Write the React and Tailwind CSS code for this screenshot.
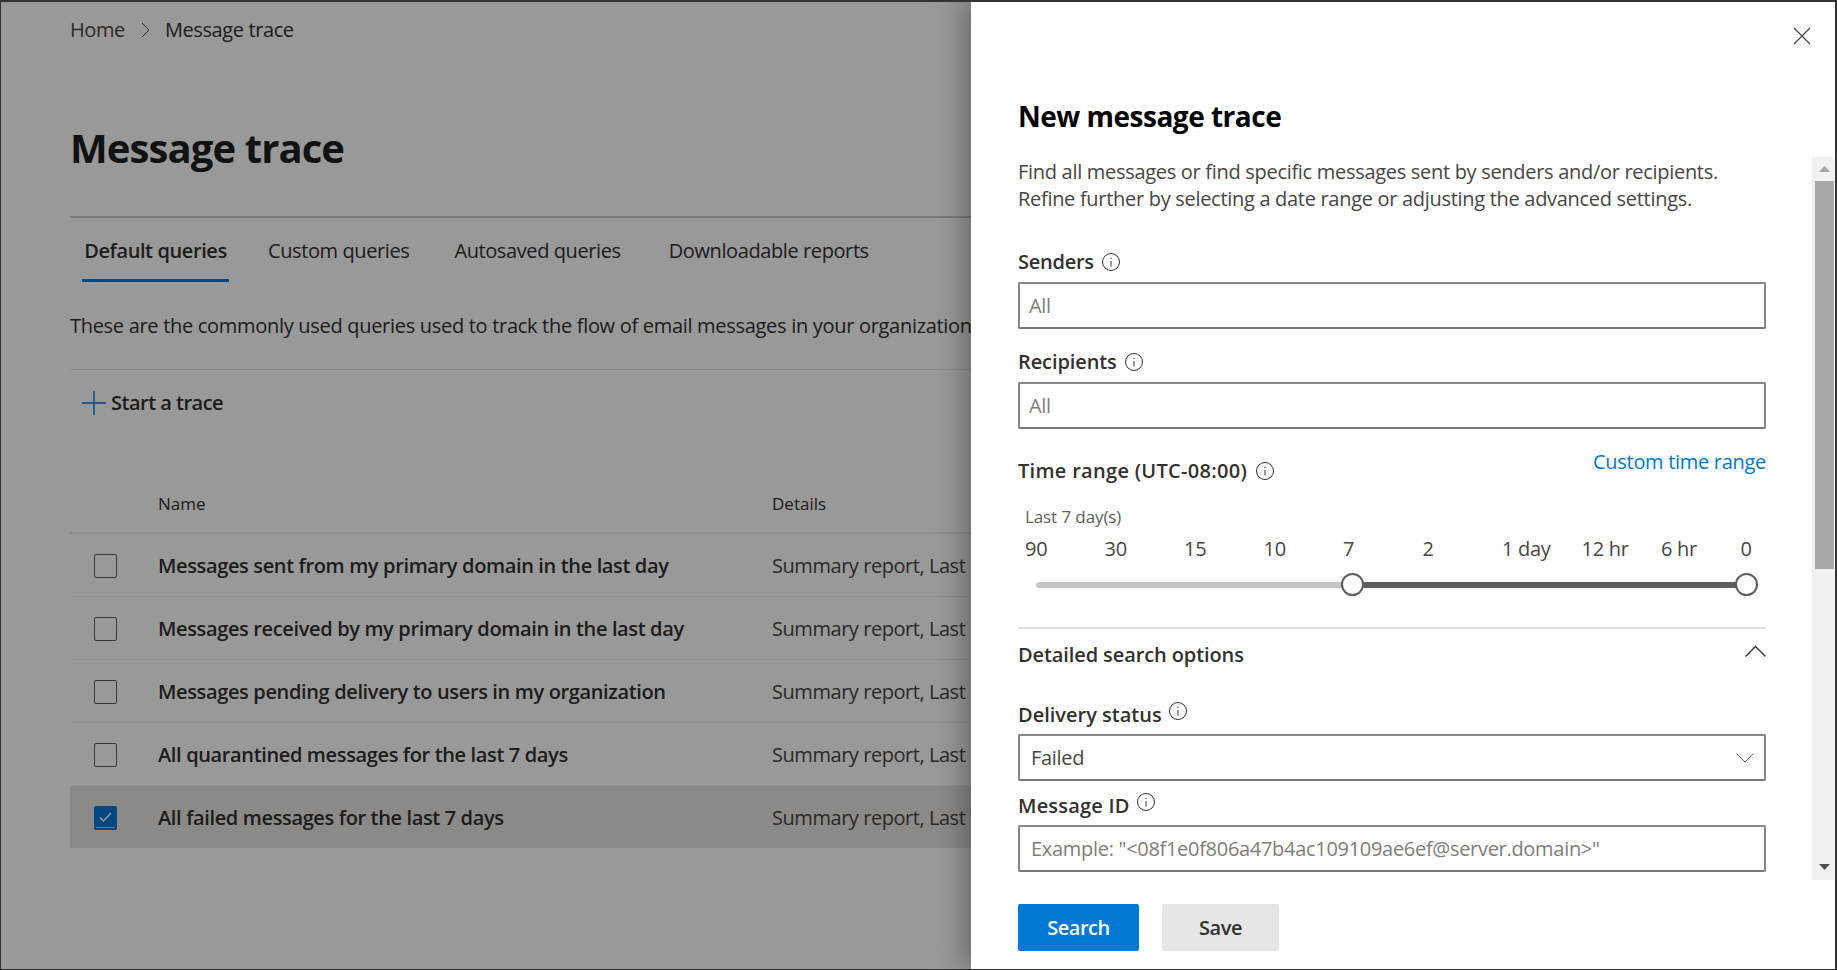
import React from 'react';

const rows = [
    { name: 'Messages sent from my primary domain in the last day' },
    { name: 'Messages received by my primary domain in the last day' },
    { name: 'Messages pending delivery to users in my organization' },
    { name: 'All quarantined messages for the last 7 days' },
    { name: 'All failed messages for the last 7 days', selected: true },
];

const ticks = ['90', '30', '15', '10', '7', '2', '1 day', '12 hr', '6 hr', '0'];

const InfoIcon = () => (
    <svg width="20" height="20" viewBox="0 0 20 20" fill="none" stroke="#323130" strokeWidth="1">
        <circle cx="10" cy="10" r="8.5" />
        <path d="M10 9v5.5" />
        <circle cx="10" cy="6.4" r="0.7" fill="#323130" stroke="none" />
    </svg>
);

const Label = ({ children, icon = 'ml-[7px]', track = 'tracking-[-0.1px]' }) => (
    <div className={`flex items-center text-[20px] leading-[26px] font-semibold text-[#323130] ${track}`}>
        {children}
        <span className={icon}><InfoIcon /></span>
    </div>
);

const Field = ({ children, className = 'text-[#7f7d7b]', pad = 'pl-[9px]' }) => (
    <div className={`flex items-center justify-between h-[47px] rounded-[2px] border-2 border-[#8a8886] border-b-[#7a7876] bg-white text-[20px] tracking-[-0.3px] ${pad} ${className}`}>
        {children}
    </div>
);

export default function App() {
    return (
        <div className="relative h-[970px] w-[1837px] overflow-hidden bg-white font-['Open_Sans','Noto_Sans',sans-serif] text-[#323130]">
            {/* page behind the panel */}
            <div className="pl-[70px] pt-[15px] w-[1300px]">
                <div className="flex items-center h-[30px] text-[20px] tracking-[-0.4px]">
                    <span className="text-[#484644]">Home</span>
                    <svg className="ml-[16px] mr-[15px]" width="9" height="16" viewBox="0 0 9 16" fill="none" stroke="#484644" strokeWidth="1">
                        <path d="M1 1l7 7-7 7" />
                    </svg>
                    <span>Message trace</span>
                </div>
                <h1 className="mt-[75px] text-[40px] leading-[56px] font-bold tracking-[-0.9px] text-[#201f1e]">Message trace</h1>
                <div className="mt-[40px] h-[2px] bg-[#d2d0ce]" />
                <div className="flex ml-[12px] text-[20px] tracking-[-0.4px]">
                    <div className="w-[147px] h-[64px] flex flex-col items-center">
                        <span className="mt-[19px] leading-[28px] font-semibold tracking-[-0.4px] whitespace-nowrap">Default queries</span>
                        <span className="mt-auto h-[3px] w-full bg-[#0078d4]" />
                    </div>
                    <div className="ml-[39px] mt-[19px] leading-[28px]">Custom queries</div>
                    <div className="ml-[45px] mt-[19px] leading-[28px]">Autosaved queries</div>
                    <div className="ml-[48px] mt-[19px] leading-[28px]">Downloadable reports</div>
                </div>
                <p className="mt-[29px] text-[20px] leading-[30px] tracking-[-0.3px] whitespace-nowrap">
                    These are the commonly used queries used to track the flow of email messages in your organization.
                </p>
                <div className="mt-[28px] h-px bg-[#edebe9]" />
                <div className="mt-[18px] ml-[12px] flex items-center h-[30px]">
                    <svg width="24" height="24" viewBox="0 0 24 24" fill="none" stroke="#0078d4" strokeWidth="1.4">
                        <path d="M12 0v24M0 12h24" />
                    </svg>
                    <span className="ml-[5px] text-[20px] font-semibold tracking-[-0.5px]">Start a trace</span>
                </div>
                <div className="mt-[57px] flex items-center h-[59px] border-b-2 border-[#edebe9] text-[17px]">
                    <div className="ml-[88px] w-[614px]">Name</div>
                    <div>Details</div>
                </div>
                {rows.map((row) => (
                    <div
                        key={row.name}
                        className={`flex items-center pt-[2px] text-[20px] whitespace-nowrap ${row.selected ? 'h-[62px] bg-[#e8e6e4]' : 'h-[63px] border-b border-[#f3f2f1]'}`}
                    >
                        <span className={`ml-[24px] flex items-center justify-center w-[23px] h-[24px] rounded-[2px] border ${row.selected ? 'bg-[#0078d4] border-[#0078d4]' : 'bg-white border-[#605e5c]'}`}>
                            {row.selected && (
                                <svg width="21" height="22" viewBox="0 0 21 22" fill="none" stroke="#fff" strokeWidth="1.5">
                                    <path d="M5 10.5l3.5 3.5 7.5-8" />
                                    <path d="M1 20.5h19" strokeWidth="1" strokeOpacity="0.6" />
                                </svg>
                            )}
                        </span>
                        <span className="ml-[41px] w-[614px] font-semibold tracking-[-0.36px]">{row.name}</span>
                        <span className="tracking-[-0.45px] text-[#484644]">Summary report, Last 7 days</span>
                    </div>
                ))}
            </div>

            {/* dimming layer */}
            <div className="absolute inset-0 bg-black/40" />

            {/* side panel */}
            <div className="absolute top-0 bottom-0 right-0 w-[866px] bg-white shadow-[-6px_0_28px_rgba(0,0,0,0.35)]">
                <svg className="absolute left-[822px] top-[27px]" width="18" height="18" viewBox="0 0 18 18" fill="none" stroke="#484644" strokeWidth="1.2">
                    <path d="M1 1l16 16M17 1L1 17" />
                </svg>
                <h2 className="pl-[47px] pt-[96px] h-[157px] text-[28px] leading-[40px] font-bold tracking-[-0.5px] text-black">New message trace</h2>

                <div className="flex h-[723px] overflow-hidden">
                    <div className="ml-[47px] w-[748px] shrink-0 pt-px">
                        <p className="text-[20px] leading-[27px] tracking-[-0.3px] whitespace-nowrap text-[#484644]">
                            Find all messages or find specific messages sent by senders and/or recipients.
                            <br />
                            Refine further by selecting a date range or adjusting the advanced settings.
                        </p>
                        <div className="mt-[37px]"><Label track="tracking-[-0.25px]">Senders</Label></div>
                        <div className="mt-[7px]"><Field>All</Field></div>
                        <div className="mt-[20px]"><Label>Recipients</Label></div>
                        <div className="mt-[7px]"><Field>All</Field></div>
                        <div className="mt-[20px] flex justify-between h-[34px]">
                            <div className="pt-[9px]"><Label icon="ml-[8px]" track="tracking-[0.3px]">Time range (UTC-08:00)</Label></div>
                            <a className="text-[20px] leading-[26px] tracking-[-0.3px] text-[#0078d4]">Custom time range</a>
                        </div>
                        <div className="mt-[24px] pl-[7px] text-[17px] leading-[20px] tracking-[-0.1px] text-[#605e5c]">Last 7 day(s)</div>
                        <div className="mt-[9px] ml-[7px] flex text-[20px] leading-[26px] tracking-[-0.3px] text-[#484644]">
                            {ticks.map((tick) => (
                                <span key={tick} className="w-[79.5px] shrink-0 whitespace-nowrap">{tick}</span>
                            ))}
                        </div>
                        <div className="relative mt-[11px] ml-[18px] w-[711px] h-[23px] flex items-center">
                            <span className="w-[316px] h-[6px] rounded-l-full bg-[#c8c6c4]" />
                            <span className="flex-1 h-[6px] bg-[#605e5c]" />
                            <span className="absolute left-[305px] top-0 w-[23px] h-[23px] rounded-full border-2 border-[#605e5c] bg-white" />
                            <span className="absolute left-[699px] top-0 w-[23px] h-[23px] rounded-full border-2 border-[#605e5c] bg-white" />
                        </div>
                        <div className="mt-[31px] h-[2px] bg-[#e1dfdd]" />
                        <div className="mt-[13px] flex justify-between">
                            <span className="text-[20px] leading-[26px] font-semibold tracking-[-0.1px]">Detailed search options</span>
                            <svg className="mt-[3px]" width="21" height="12" viewBox="0 0 21 12" fill="none" stroke="#323130" strokeWidth="1.4">
                                <path d="M.5 11.5l10-10 10 10" />
                            </svg>
                        </div>
                        <div className="mt-[34px]">
                            <div className="flex text-[20px] leading-[26px] font-semibold">
                                Delivery status
                                <span className="ml-[6px] -mt-[1px]"><InfoIcon /></span>
                            </div>
                        </div>
                        <div className="mt-[6px]">
                            <Field className="text-[#484644]" pad="pl-[11px] pr-[10px]">
                                Failed
                                <svg width="18" height="10" viewBox="0 0 18 10" fill="none" stroke="#605e5c" strokeWidth="1">
                                    <path d="M.5.5L9 9 17.5.5" />
                                </svg>
                            </Field>
                        </div>
                        <div className="mt-[12px]">
                            <div className="flex text-[20px] leading-[26px] font-semibold tracking-[0.2px]">
                                Message ID
                                <span className="ml-[6px] -mt-[1px]"><InfoIcon /></span>
                            </div>
                        </div>
                        <div className="mt-[6px]">
                            <Field pad="pl-[11px]">Example: "&lt;08f1e0f806a47b4ac109109ae6ef@server.domain&gt;"</Field>
                        </div>
                    </div>

                    {/* scrollbar */}
                    <div className="ml-[46px] w-[22px] flex flex-col items-end bg-[#f1f1f1]">
                        <div className="w-[19px] h-[24px] flex items-center justify-center">
                            <svg width="11" height="6" viewBox="0 0 11 6" fill="#a3a3a3"><path d="M5.5 0L11 6H0z" /></svg>
                        </div>
                        <div className="w-[19px] h-[388px] bg-[#a8a8a8]" />
                        <div className="mt-auto w-[19px] h-[26px] flex items-center justify-center">
                            <svg width="11" height="6" viewBox="0 0 11 6" fill="#505050"><path d="M0 0h11L5.5 6z" /></svg>
                        </div>
                    </div>
                </div>

                <div className="mt-[24px] ml-[47px] flex gap-[23px] text-[20px] tracking-[-0.5px] font-semibold">
                    <button className="w-[121px] h-[47px] pt-px rounded-[2px] bg-[#0078d4] text-white">Search</button>
                    <button className="w-[117px] h-[47px] pt-px rounded-[2px] bg-[#e6e6e6] text-[#323130]">Save</button>
                </div>
            </div>

            {/* screenshot frame */}
            <div className="absolute inset-0 pointer-events-none border border-[#333333] border-t-2 border-r-2" />
        </div>
    );
}
